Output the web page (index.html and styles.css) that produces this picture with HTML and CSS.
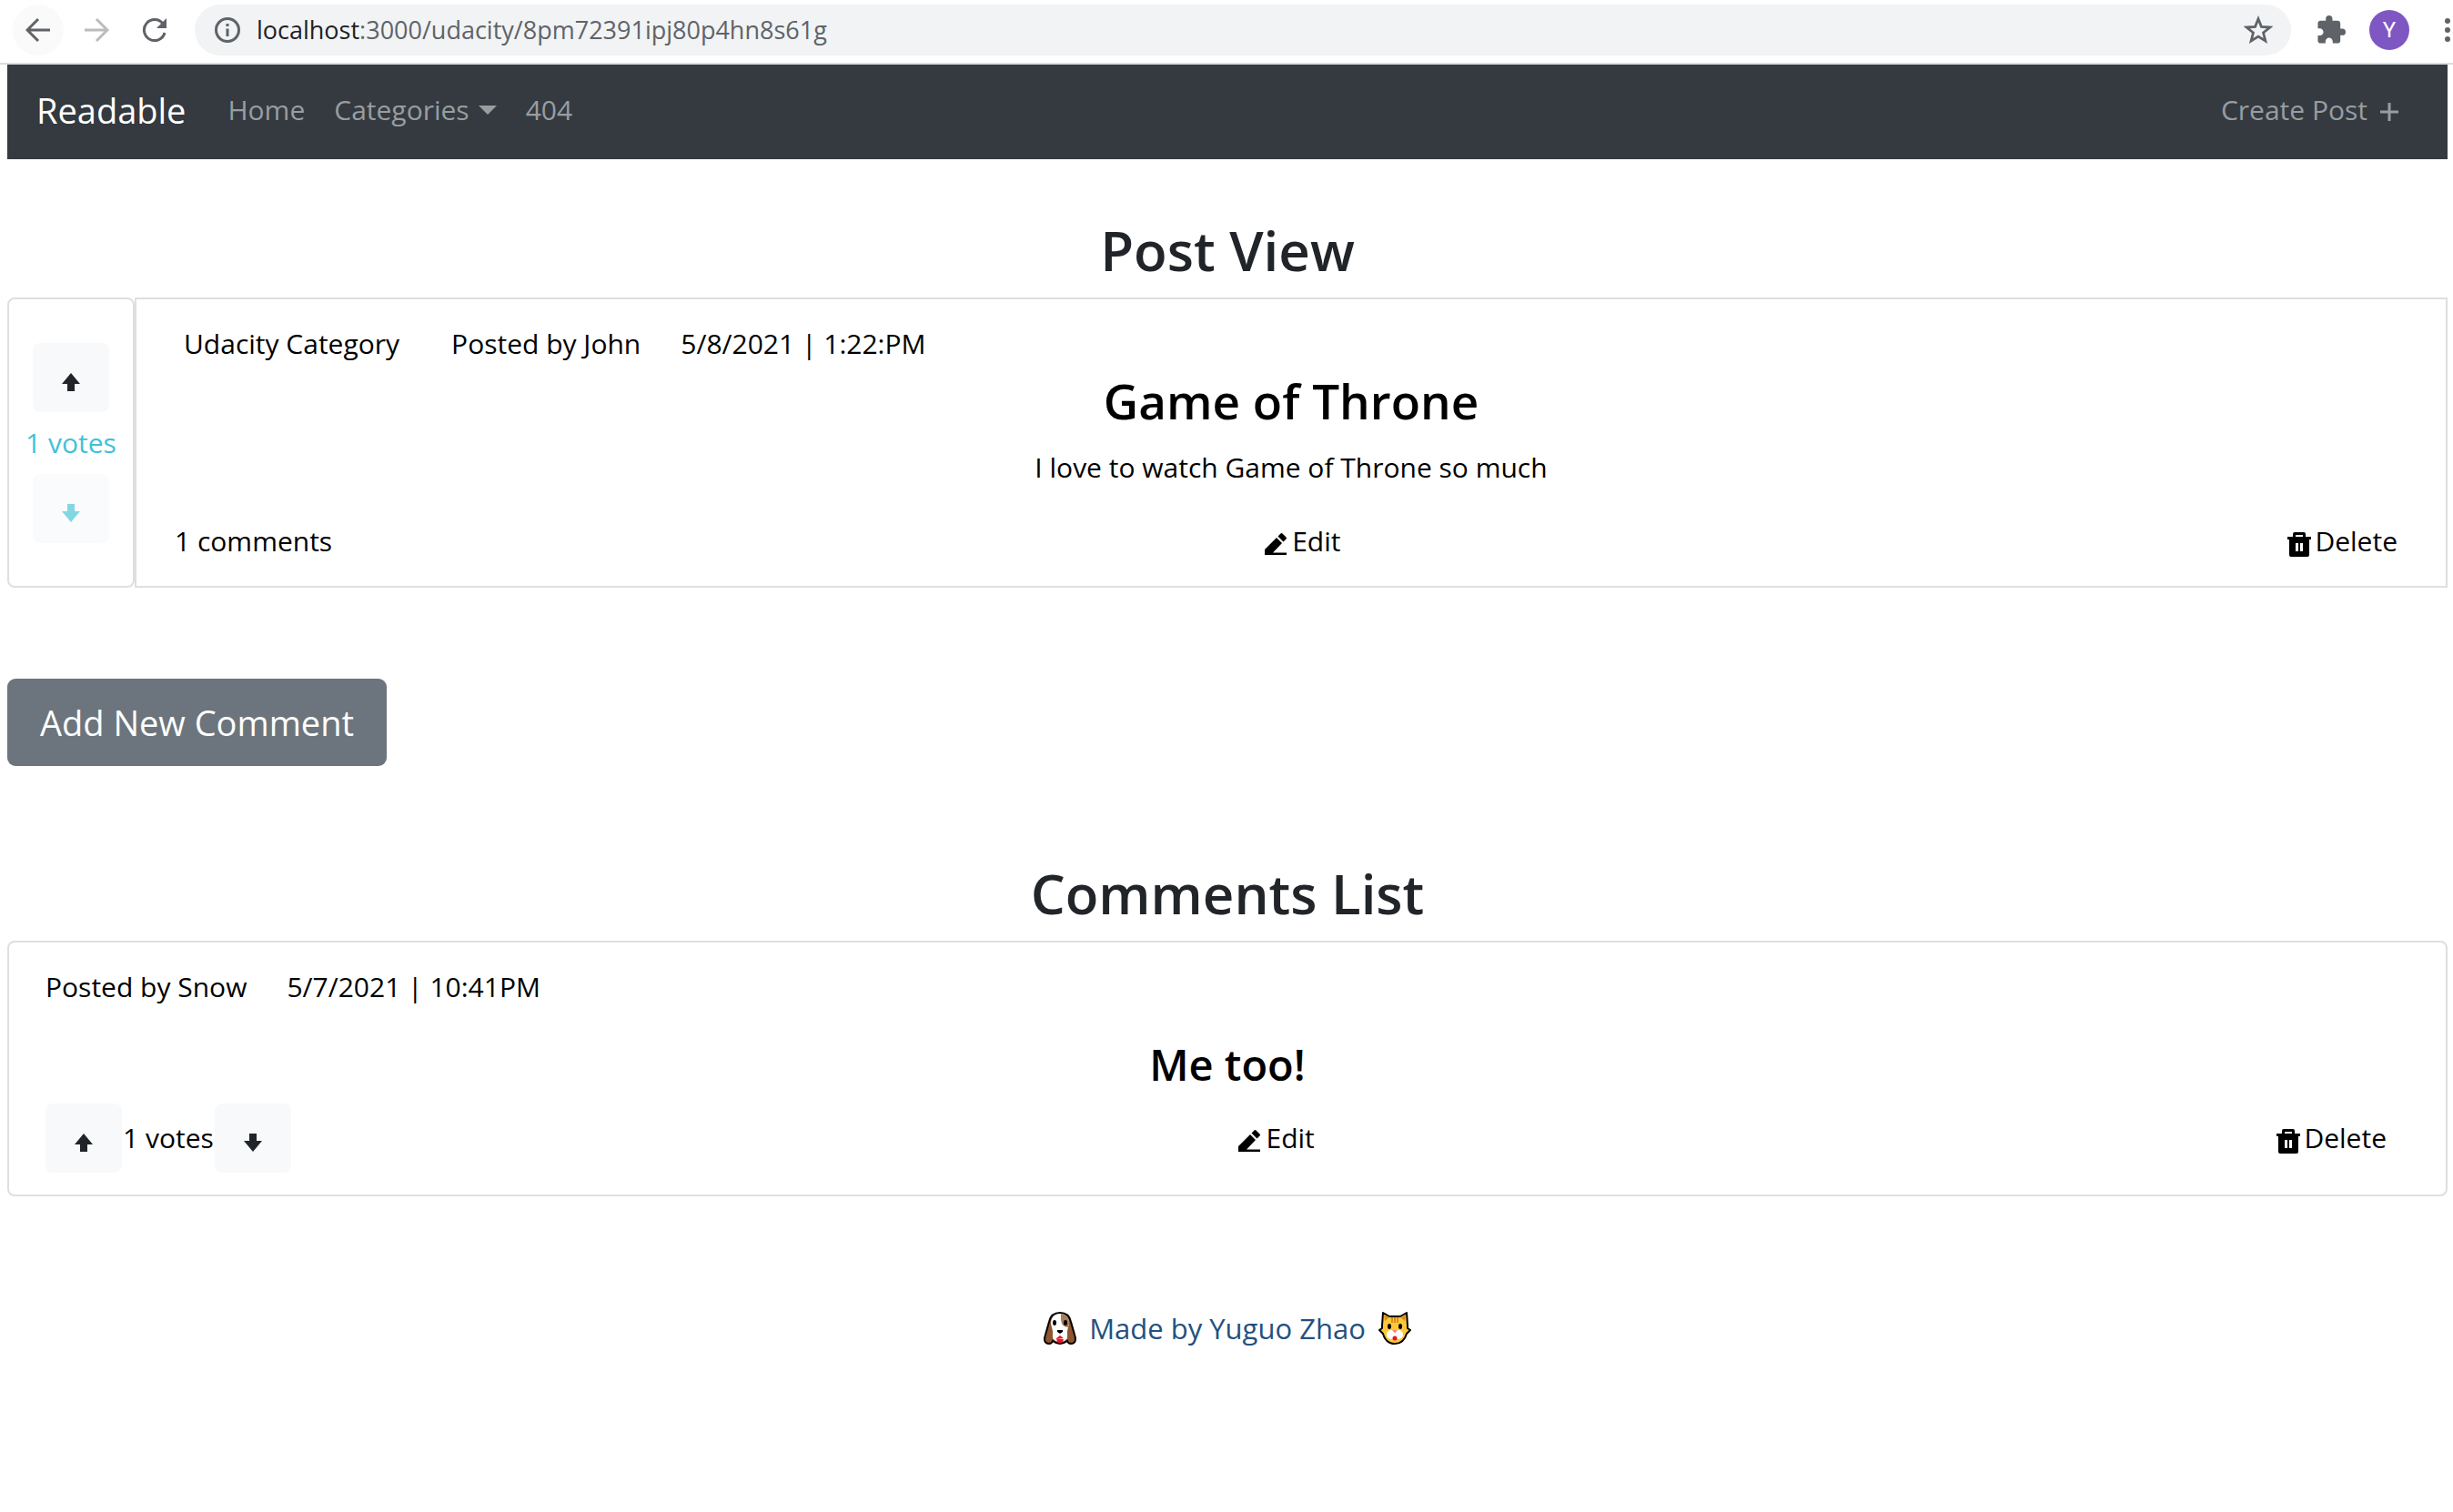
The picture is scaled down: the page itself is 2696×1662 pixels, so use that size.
FILE: index.html
```html
<!DOCTYPE html>
<html lang="en">
<head>
<meta charset="utf-8">
<title>Readable</title>
<link rel="stylesheet" href="styles.css">
</head>
<body>
<svg class="defs" aria-hidden="true">
  <symbol id="arrow-up" viewBox="0 0 20 20"><path d="M10 0 20 12H14V20H6V12H0z"/></symbol>
  <symbol id="arrow-down" viewBox="0 0 20 20"><path d="M10 20 20 8H14V0H6V8H0z"/></symbol>
  <symbol id="pencil" viewBox="0 0 24 24"><path d="M0 24V18L13 5 19 11 9 21.500H24V24zM14.500 3.500 17.500.5Q18.500-.5 19.500.5L23.500 4.500Q24.500 5.500 23.500 6.500L20.500 9.500z"/></symbol>
  <symbol id="trash" viewBox="0 0 26 27"><path fill-rule="evenodd" d="M6 5V2Q6 0 8 0H18Q20 0 20 2V5H26V8H24V25Q24 27 22 27H4Q2 27 2 25V8H0V5zM9 5H17V3H9zM9 12V21H12V12zM14 12V21H17V12z"/></symbol>
</svg>

<header class="browser">
  <button class="tool tool-back" aria-label="Back"><svg viewBox="0 0 28 28"><path d="M27 14H3M14 2 2 14 14 26" fill="none" stroke="currentColor" stroke-width="3"/></svg></button>
  <button class="tool tool-off" aria-label="Forward"><svg viewBox="0 0 28 28"><path d="M1 14H25M14 2 26 14 14 26" fill="none" stroke="currentColor" stroke-width="3"/></svg></button>
  <button class="tool" aria-label="Reload"><svg viewBox="0 0 28 28"><path d="M23 7A11.500 11.500 0 1 0 25 17" fill="none" stroke="currentColor" stroke-width="3"/><path d="M27 1V12H16z" fill="currentColor"/></svg></button>
  <div class="omnibox">
    <svg class="icon-info" viewBox="0 0 28 28"><circle cx="14" cy="14" r="12.500" fill="none" stroke="currentColor" stroke-width="3"/><path d="M12.500 12.500h3V21h-3zM12.500 7h3v3h-3z" fill="currentColor"/></svg>
    <div class="url" role="textbox" aria-label="Address">localhost<span class="url-rest">:3000/udacity/8pm72391ipj80p4hn8s61g</span></div>
    <button class="star" aria-label="Bookmark"><svg viewBox="0 0 30 30"><path d="M15 3.500 18.200 11.600 27 12.200 20.200 17.800 22.400 26.200 15 21.600 7.600 26.200 9.800 17.800 3 12.200 11.800 11.600z" fill="none" stroke="currentColor" stroke-width="2.600"/></svg></button>
  </div>
  <button class="puzzle" aria-label="Extensions"><svg viewBox="1 1 22 22"><path fill="currentColor" d="M20.500 11H19V7c0-1.100-.9-2-2-2h-4V3.500a2.500 2.500 0 0 0-5 0V5H4c-1.100 0-2 .9-2 2v3.800h1.500c1.500 0 2.700 1.200 2.700 2.700S5 16.200 3.500 16.200H2V20c0 1.100.9 2 2 2h3.800v-1.500c0-1.500 1.200-2.700 2.700-2.700s2.700 1.200 2.700 2.700V22H17c1.100 0 2-.9 2-2v-4h1.500a2.500 2.500 0 0 0 0-5z"/></svg></button>
  <button class="avatar">Y</button>
  <button class="dots" aria-label="Menu"><svg viewBox="0 0 6 26"><circle cx="3" cy="3" r="3"/><circle cx="3" cy="13" r="3"/><circle cx="3" cy="23" r="3"/></svg></button>
</header>

<div class="page">
  <nav class="navbar">
    <a class="brand" href="#">Readable</a>
    <a class="nav-link" href="#">Home</a>
    <button class="nav-link nav-drop">Categories<span class="caret"></span></button>
    <a class="nav-link" href="#">404</a>
    <a class="nav-link nav-create" href="#">Create Post<svg class="plus" viewBox="0 0 20 20"><path d="M10 0V20M0 10H20" stroke="currentColor" stroke-width="3"/></svg></a>
  </nav>

  <main>
    <h1 class="heading">Post View</h1>
    <article class="post">
      <div class="card vote-card">
        <button class="vote" aria-label="Vote up"><svg><use href="#arrow-up"/></svg></button>
        <span class="votes-voted">1 votes</span>
        <button class="vote vote-disabled" aria-label="Vote down"><svg><use href="#arrow-down"/></svg></button>
      </div>
      <div class="card post-card">
        <div class="meta post-meta">
          <a class="category" href="#">Udacity Category</a>
          <span>Posted by John</span>
          <span>5/8/2021 | 1:22:PM</span>
        </div>
        <h2 class="post-title">Game of Throne</h2>
        <p class="post-text">I love to watch Game of Throne so much</p>
        <div class="actions post-actions">
          <span>1 comments</span>
          <button class="action edit"><svg class="pencil"><use href="#pencil"/></svg>Edit</button>
          <button class="action"><svg class="trash"><use href="#trash"/></svg>Delete</button>
        </div>
      </div>
    </article>

    <button class="add">Add New Comment</button>

    <h1 class="heading">Comments List</h1>
    <article class="card comment">
      <div class="meta">
        <span>Posted by Snow</span>
        <span>5/7/2021 | 10:41PM</span>
      </div>
      <h3 class="comment-text">Me too!</h3>
      <div class="actions comment-actions">
        <div class="votes">
          <button class="vote" aria-label="Vote up"><svg><use href="#arrow-up"/></svg></button>
          <span>1 votes</span>
          <button class="vote" aria-label="Vote down"><svg><use href="#arrow-down"/></svg></button>
        </div>
        <button class="action edit"><svg class="pencil"><use href="#pencil"/></svg>Edit</button>
        <button class="action"><svg class="trash"><use href="#trash"/></svg>Delete</button>
      </div>
    </article>
  </main>

  <footer class="footer">
    <svg class="pet" viewBox="0 0 36 36"><path d="M18 1C10 1 7 6 6 11L2 25C0 31 1 35 6 35Q9 35 10 32Q14 35 18 35T26 32Q27 35 30 35C35 35 36 31 34 25L30 11C29 6 26 1 18 1z" fill="#8e562e" stroke="#000" stroke-width="2"/><path d="M18 2C11 2 8 7 8 13L10 21V29Q13 33 18 33T26 29V21L28 13C28 7 25 2 18 2z" fill="#fff"/><path d="M19 2C25 2 28 7 28 13L27 17Q20 17 19 9z" fill="#a57f5a"/><path d="M14 30H22L21 33Q18 36 15 33L14 29 18 26 22 29z" fill="#e81224"/><ellipse cx="12" cy="12" rx="2" ry="3"/><ellipse cx="24" cy="12" rx="2" ry="3"/><path d="M15 20H21V22L18 24 15 22z"/></svg>
    <a class="credit" href="#">Made by Yuguo Zhao</a>
    <svg class="pet" viewBox="0 0 36 36"><path d="M5 1 12 5H24L31 1 32 15V18L35 20 31 24C29 31 24 35 18 35S7 31 5 24L1 20 4 18V15z" fill="#fcc83a" stroke="#000" stroke-width="2" stroke-linejoin="round"/><path d="M6 3 12 6 7 10zM30 3 24 6 29 10zM14 6H16V12H14zM17 6H19V12H17zM20 6H22V12H20z" fill="#d8901b"/><circle cx="14" cy="25" r="5" fill="#fff"/><circle cx="22" cy="25" r="5" fill="#fff"/><path d="M15 20H21L18 23.500z" fill="#f9877c"/><circle cx="18" cy="29" r="2.500" fill="#e81224"/><ellipse cx="12" cy="16" rx="2" ry="3"/><ellipse cx="24" cy="16" rx="2" ry="3"/></svg>
  </footer>
</div>
</body>
</html>
```
FILE: styles.css
```css
* { box-sizing: border-box; }

body {
  margin: 0;
  background: #fff;
  color: #000;
  font-family: "Open Sans", "Noto Sans", sans-serif;
  font-size: 30px;
  line-height: 48px;
}

h1, h2, h3, p { margin: 0; }
a { color: inherit; text-decoration: none; }

button {
  margin: 0;
  padding: 0;
  border: 0;
  background: none;
  color: inherit;
  font: inherit;
  cursor: pointer;
}

svg { display: block; flex: none; }
.defs { display: none; }

/* Browser toolbar */
.browser {
  display: flex;
  align-items: center;
  height: 71px;
  padding: 0 3px 3px 14px;
  border-bottom: 2px solid #dadce0;
  color: #5f6368;
  overflow: hidden;
}

.tool {
  display: grid;
  place-items: center;
  flex: none;
  width: 56px;
  height: 56px;
  margin-right: 8px;
  border-radius: 50%;
}
.tool svg { width: 28px; height: 28px; }
.tool-back { background: #fafafa; }
.tool-off { color: #babcbe; }

.omnibox {
  display: flex;
  align-items: center;
  flex: 1;
  height: 56px;
  margin-left: 8px;
  padding: 0 20px 0 22px;
  border-radius: 28px;
  background: #f1f3f4;
}
.icon-info { width: 28px; height: 28px; }
.url {
  flex: 1;
  margin-left: 18px;
  color: #202124;
  font-size: 27px;
}
.url-rest { color: #5f6368; }
.star svg { width: 32px; height: 32px; }
.puzzle { margin-left: 28px; }
.puzzle svg { width: 32px; height: 32px; }
.avatar {
  width: 44px;
  height: 44px;
  margin-left: 26px;
  border-radius: 50%;
  background: #7e57c2;
  color: #fff;
  font-family: Roboto, sans-serif;
  font-size: 24px;
  line-height: 44px;
}
.dots { margin-left: 39px; }
.dots svg { width: 6px; height: 26px; fill: currentColor; }

/* Application */
.page { padding: 0 6px 0 8px; }

.navbar {
  display: flex;
  align-items: center;
  height: 104px;
  padding: 0 54px 5px 32px;
  background: #343a40;
}
.brand {
  margin-right: 46px;
  color: #fff;
  font-size: 38px;
}
.nav-link {
  display: flex;
  align-items: center;
  margin-right: 32px;
  color: #999da0;
}
.caret {
  margin-left: 10px;
  border: 10px solid transparent;
  border-top-color: currentColor;
  border-bottom: 0;
}
.nav-create { margin: 0 0 0 auto; }
.plus { width: 20px; height: 20px; margin: 4px 0 0 14px; }

.heading {
  padding: 62px 0 14px;
  color: #212529;
  font-size: 60px;
  font-weight: 600;
  line-height: 76px;
  text-align: center;
}

.card {
  border: 2px solid #dfdfdf;
  border-radius: 8px;
}

.post { display: flex; }
.vote-card {
  display: flex;
  flex-direction: column;
  align-items: center;
  flex: none;
  width: 140px;
  padding-top: 48px;
}
.votes-voted {
  padding: 10px 0;
  color: #3fc1d8;
}
.vote {
  display: grid;
  place-items: center;
  width: 84px;
  height: 76px;
  padding-top: 10px;
  border-radius: 8px;
  background: #f8f9fb;
  color: #212529;
}
.vote svg { width: 20px; height: 20px; fill: currentColor; }
.vote-disabled { background: #fafbfd; color: #84d7e2; }

.post-card {
  flex: 1;
  padding: 25px 42px;
  border-radius: 0;
}
.meta { display: flex; gap: 44px; }
.post-meta { padding-left: 10px; }
.category { margin-right: 13px; }
.post-title {
  margin: 5px 0 16px;
  font-size: 53px;
  font-weight: 600;
  line-height: 67px;
  text-align: center;
}
.post-text { text-align: center; }

.actions {
  display: flex;
  align-items: center;
  justify-content: space-between;
}
.post-actions { margin-top: 33px; padding-right: 11px; }
.comment-actions { padding-right: 25px; }
.action { display: flex; align-items: center; }
.edit { margin-right: 16px; }
.pencil { width: 24px; height: 24px; margin: 6px 6px 0 0; }
.trash { width: 26px; height: 27px; margin: 6px 4px 0 0; }

.add {
  display: block;
  height: 96px;
  margin: 100px 0 40px;
  padding: 0 36px;
  border-radius: 9px;
  background: #6c757d;
  color: #fff;
  font-size: 38px;
}

.comment { padding: 25px 40px 24px; }
.comment-text {
  margin: 33px 0 15px;
  font-size: 47px;
  font-weight: 600;
  line-height: 56px;
  text-align: center;
}
.votes { display: flex; align-items: center; }
.votes span { padding: 0 1px; }

.footer {
  display: flex;
  align-items: center;
  justify-content: center;
  gap: 14px;
  padding-top: 121px;
}
.pet { width: 36px; height: 36px; }
.credit { color: #24507f; font-size: 31px; }
```
